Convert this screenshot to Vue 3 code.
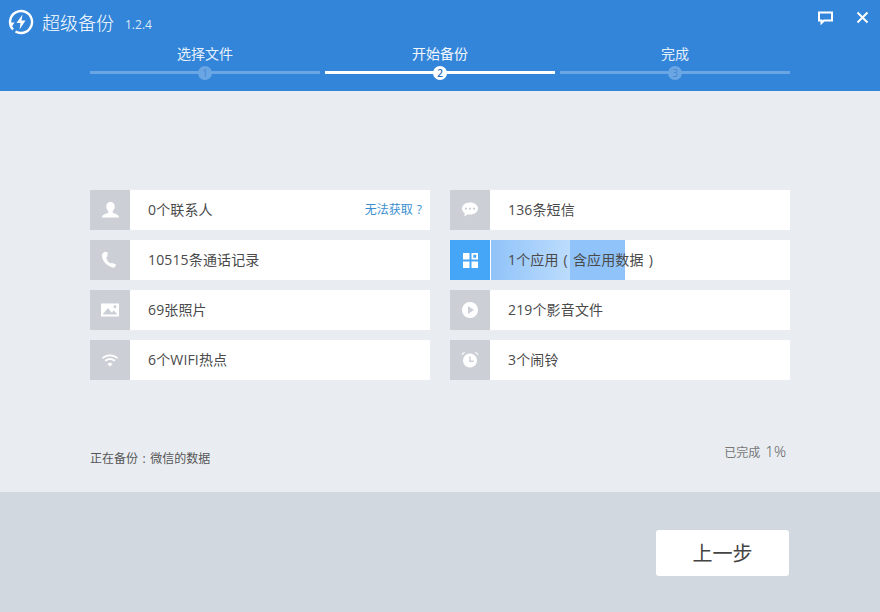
<script setup>
const left = [
  { id: 'user', text: '0个联系人', link: '无法获取' },
  { id: 'phone', text: '10515条通话记录' },
  { id: 'image', text: '69张照片' },
  { id: 'wifi', text: '6个WIFI热点' },
]
const right = [
  { id: 'chat', text: '136条短信' },
  { id: 'apps', text: '1个应用', paren: '含应用数据', active: true },
  { id: 'play', text: '219个影音文件' },
  { id: 'alarm', text: '3个闹铃' },
]
const columns = [left, right]
const steps = [
  { n: 1, label: '选择文件' },
  { n: 2, label: '开始备份', on: true },
  { n: 3, label: '完成' },
]
</script>

<template>
  <div class="app">
    <header class="head">
      <div class="top">
        <div class="brand">
          <svg class="logo" width="26" height="26" viewBox="0 0 26 26">
            <path d="M5 20.500A11 11 0 1 1 13 24a11 11 0 0 1-5.500-1.500" fill="none" stroke="#fff" stroke-width="2.400"/>
            <path d="M1.500 13.500h5l-2.500 4z" fill="#fff"/>
            <path d="M14.500 5.500 8.500 14h4l-1 6.500 6-9h-4z" fill="#fff"/>
          </svg>
          <span class="title">超级备份</span>
          <span class="ver">1.2.4</span>
        </div>
        <div class="tools">
          <svg width="15" height="14" viewBox="0 0 15 14"><path d="M1 1.500h13v8H6l-2.500 2.500V9.500H1z" fill="none" stroke="#fff" stroke-width="2"/></svg>
          <svg width="13" height="13" viewBox="0 0 13 13"><path d="M1.500 1.500l10 10M11.500 1.500l-10 10" stroke="#fff" stroke-width="2"/></svg>
        </div>
      </div>
      <div class="steps">
        <div v-for="s in steps" :key="s.n" class="step" :class="{ on: s.on }">
          <div class="step-label">{{ s.label }}</div>
          <div class="step-line"><span class="dot">{{ s.n }}</span></div>
        </div>
      </div>
    </header>

    <main class="main">
      <div class="grid">
        <div v-for="(col, i) in columns" :key="i" class="col">
          <div v-for="item in col" :key="item.id" class="row" :class="{ active: item.active }">
            <div class="ico">
              <svg width="20" height="20" viewBox="0 0 20 20" fill="#fff">
                <template v-if="item.id === 'user'">
                  <path d="M10.500 2c-2.600 0-4.200 1.800-4.200 4.500 0 2 .9 3.800 2 4.700v1.500c-1.800 1-5.800 1.300-6.300 4.300v.5h17v-.5c-.5-3-4.500-3.300-6.300-4.300v-1.500c1.100-.9 2-2.700 2-4.700 0-2.700-1.600-4.500-4.200-4.500z"/>
                </template>
                <template v-else-if="item.id === 'phone'">
                  <path transform="translate(-1.500 -.3) scale(1.15 1.05)" d="M5.500 2 7.500 2.500c.4.100.6.500.6.900L7.600 6.500c-.1.500-.4.800-.9.900.4 2.300 1.700 4.400 3.700 5.700.3-.4.700-.6 1.200-.5l3 1c.4.100.6.500.5.900l-.8 2c-.3.500-1 .7-1.700.5C7 15.500 3.500 11 3 6c-.1-1.600.8-3.300 2.500-4z"/>
                </template>
                <template v-else-if="item.id === 'image'">
                  <path fill-rule="evenodd" d="M1 3.500h18v13H1zM2.500 14.500h15l-3.500-4-2.500 2-3.500-4.500zM15 5.300a1.500 1.500 0 1 0 .01 0z"/>
                </template>
                <template v-else-if="item.id === 'wifi'">
                  <path d="M2 7.500C6.500 3.500 13.500 3.500 18 7.500l-1 1.200c-4-3.400-10-3.400-14 0z"/>
                  <path d="M4.700 10.300c3-2.600 7.600-2.600 10.600 0l-1 1.200c-2.500-2.100-6.100-2.100-8.600 0z"/>
                  <path d="M10 12.500l2.600 1.600L10 16.500l-2.600-2.400z"/>
                </template>
                <template v-else-if="item.id === 'chat'">
                  <path fill-rule="evenodd" d="M10 2.500c-4.700 0-8 2.800-8 6 0 2 1.100 3.700 2.900 4.700l-.7 3.300 3.500-2.200c.7.200 1.500.3 2.300.3 4.700 0 8-2.800 8-6.100s-3.300-6-8-6zM6 7.500a1.100 1.100 0 1 0 .01 0zM10 7.500a1.100 1.100 0 1 0 .01 0zM14 7.500a1.100 1.100 0 1 0 .01 0z"/>
                </template>
                <template v-else-if="item.id === 'apps'">
                  <path fill-rule="evenodd" d="M3 3h6.500v6.500H3zM3 11.500h6.500V18H3zM11.500 11.500H18V18h-6.500zM11.500 3H18v6.500h-6.500zM13.300 4.800v2.900h2.900V4.800z"/>
                </template>
                <template v-else-if="item.id === 'play'">
                  <path fill-rule="evenodd" d="M10 2a8 8 0 1 0 .01 0zM8 6l6 4-6 4z"/>
                </template>
                <template v-else>
                  <path fill-rule="evenodd" d="M10 3.500a7 7 0 1 0 .01 0zM9.200 6.500h1.400v4h3v1.400H9.200z"/>
                  <path d="M1.500 5.500C1.500 3 3.500 1.800 5.500 2.300zM18.500 5.500c0-2.500-2-3.700-4-3.200z"/>
                </template>
              </svg>
            </div>
            <div class="body">
              <template v-if="item.active">
                <span class="fade"></span>
                <span class="solid"></span>
              </template>
              <span class="text">{{ item.text }}<template v-if="item.paren"><span class="p">(</span>{{ item.paren }}<span class="p">)</span></template></span>
              <a v-if="item.link" class="link">{{ item.link }}<span class="q">?</span></a>
            </div>
          </div>
        </div>
      </div>
      <div class="status">
        <span class="now">正在备份<span class="colon">:</span>微信的数据</span>
        <span class="done">已完成<b>1%</b></span>
      </div>
    </main>

    <footer class="foot">
      <button class="back">上一步</button>
    </footer>
  </div>
</template>

<style scoped>
.app {
  width: 880px;
  height: 612px;
  display: flex;
  flex-direction: column;
  overflow: hidden;
  font-family: "Open Sans", "Noto Sans CJK SC", sans-serif;
  color: #444;
}
.head {
  height: 91px;
  background: #3285d9;
  color: #fff;
  box-sizing: border-box;
  flex: none;
}
.top {
  height: 44px;
  display: flex;
  justify-content: space-between;
}
.brand {
  display: flex;
  align-items: center;
  padding: 0 0 0 8px;
  height: 43px;
}
.logo { flex: none; }
.title {
  margin-left: 8px;
  font-size: 18px;
  font-weight: 300;
}
.ver {
  margin-left: 11px;
  margin-top: 5px;
  font-size: 12px;
  color: #dbe9f8;
}
.tools {
  display: flex;
  gap: 23px;
  padding: 11px 11px 0 0;
  align-items: flex-start;
}
.steps {
  display: flex;
  gap: 5px;
  padding: 0 90px;
}
.step { width: 230px; }
.step-label {
  text-align: center;
  font-size: 14px;
  line-height: 20px;
  height: 27px;
  color: #e6f0fb;
}
.step-line {
  height: 3px;
  background: #6ba6e4;
  display: flex;
  justify-content: center;
  align-items: center;
}
.dot {
  width: 14px;
  height: 14px;
  flex: none;
  border-radius: 50%;
  background: #6ba6e4;
  color: #4686cf;
  font-size: 10px;
  line-height: 14px;
  text-align: center;
}
.on .step-label { color: #f2f7fd; }
.on .step-line { background: #fff; }
.on .dot { background: #fff; color: #2a6fb8; font-weight: 600; }
.main {
  height: 401px;
  flex: none;
  background: #e9edf2;
  box-sizing: border-box;
  padding: 99px 90px 0;
}
.grid {
  display: flex;
  gap: 20px;
}
.col {
  width: 340px;
  display: flex;
  flex-direction: column;
  gap: 10px;
}
.row {
  height: 40px;
  display: flex;
}
.ico {
  width: 40px;
  flex: none;
  background: #ccd0d6;
  display: flex;
  align-items: center;
  justify-content: center;
}
.active .ico { background: #45a5f6; }
.body {
  position: relative;
  flex: 1;
  background: #fff;
  display: flex;
  align-items: center;
  justify-content: space-between;
  box-sizing: border-box;
  padding: 0 8px 2px 18px;
}
.active .body { border-left: 1px solid #fff; padding-left: 17px; }
.text {
  position: relative;
  font-size: 14px;
  letter-spacing: .15px;
  color: #4a4a4a;
}
.p { margin: 0 5px; }
.link {
  font-size: 12px;
  color: #3b8fd0;
}
.q { margin-left: 4px; }
.fade {
  position: absolute;
  left: 0;
  top: 0;
  bottom: 0;
  width: 79px;
  background: linear-gradient(90deg, #90c3f9, #bcdcfd);
}
.solid {
  position: absolute;
  left: 79px;
  top: 0;
  bottom: 0;
  width: 55px;
  background: #90c3f9;
}
.status {
  display: flex;
  justify-content: space-between;
  align-items: flex-end;
  margin-top: 62px;
}
.now {
  font-size: 12px;
  color: #555;
  line-height: 18px;
}
.colon { margin: 0 4.500px; }
.done {
  font-size: 12px;
  color: #777;
  padding: 0 4px 6px 0;
  line-height: 18px;
}
.done b {
  font-weight: 300;
  font-size: 15px;
  margin-left: 5px;
  color: #555;
}
.foot {
  flex: 1;
  background: #d1d8e0;
  display: flex;
  justify-content: flex-end;
  align-items: flex-start;
  padding: 38px 91px 0 0;
}
.back {
  width: 133px;
  height: 46px;
  border: 0;
  border-radius: 3px;
  background: #fff;
  color: #444;
  font: 20px "Noto Sans CJK SC", sans-serif;
  padding: 0 0 2px;
}
</style>
